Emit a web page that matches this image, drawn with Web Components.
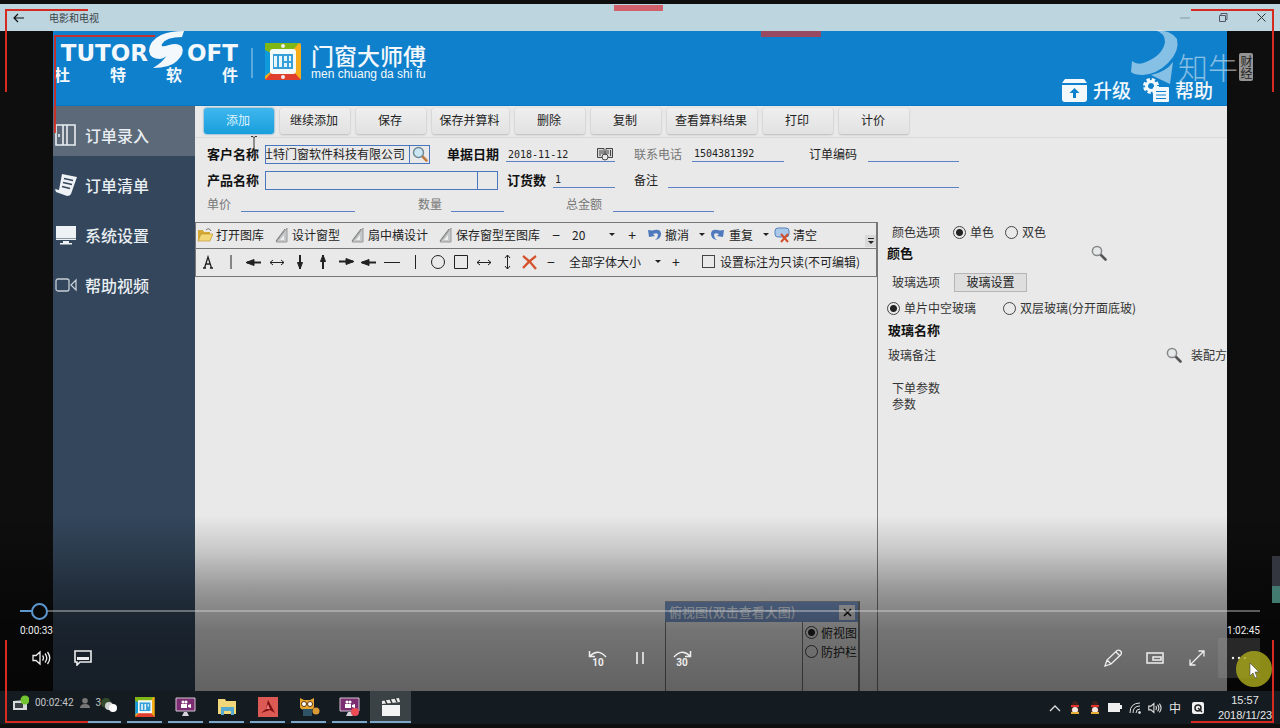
<!DOCTYPE html>
<html lang="zh-CN">
<head>
<meta charset="utf-8">
<title>电影和电视</title>
<style>
body{margin:0;background:#101010;color:#222;font:12px/16px "Noto Sans CJK SC","Noto Sans",sans-serif}
</style>
</head>
<body>
<desktop-screen></desktop-screen>
<script>
const RESET = '*,:host{box-sizing:border-box}*{margin:0}button,input,select{font:inherit;color:inherit;border:0;background:none;padding:0;border-radius:0;outline:0}svg{display:block;flex:none}';
function define(name, css, html) {
  const t = document.createElement('template');
  t.innerHTML = `<style>${RESET}${css}</style>${html}`;
  customElements.define(name, class extends HTMLElement {
    constructor() {
      super();
      this.attachShadow({ mode: 'open' }).append(t.content.cloneNode(true));
    }
  });
}
const RADIO = 'input[type=radio]{appearance:none;width:13px;height:13px;flex:none;border:1px solid #444;border-radius:50%}input[type=radio]:checked{background:radial-gradient(circle,#222 0 3px,transparent 4px)}label{display:flex;align-items:center;white-space:nowrap}';
const LENS = '<svg width="16" height="16" viewBox="0 0 16 16"><path d="M9.5 9.5l5 5" stroke="#555" stroke-width="2.6" stroke-linecap="round"/><circle cx="6" cy="6" r="4.6" fill="#e6e9ea" stroke="#888" stroke-width="1.5"/></svg>';

/* ---- window title bar ---- */
define('title-bar',
`:host{display:flex;align-items:center;height:27px;background:#bcd5df;color:#3c4448;font-size:10px}
button{display:grid;place-items:center;width:38px;height:27px}
.back{margin-right:11px}
h1{font-size:10px;font-weight:400;flex:1;color:#3c4448}`,
`<button class="back" aria-label="返回"><svg width="12" height="10" viewBox="0 0 12 10" fill="none" stroke="#111" stroke-width="1.2"><path d="M11 5H1M5 1L1 5l4 4"/></svg></button>
<h1>电影和电视</h1>
<button aria-label="最小化"><svg width="10" height="10" viewBox="0 0 10 10"><path d="M0 5h10" stroke="#8a999f"/></svg></button>
<button aria-label="还原"><svg width="10" height="10" viewBox="0 0 10 10" fill="none" stroke="#556"><path d="M1.5 2.5h6v6h-6zM3 2.500V.5h6v6H7.500"/></svg></button>
<button aria-label="关闭"><svg width="9" height="9" viewBox="0 0 9 9"><path d="M.5.5l8 8M8.500.5l-8 8" stroke="#333"/></svg></button>`);

/* ---- blue application header ---- */
define('app-header',
`:host{display:flex;height:75px;background:#0f80cb;color:#f2f8fc;align-items:flex-start;overflow:hidden;border-bottom:1px solid #0a76bf}
.brand{width:184px;display:flex;flex-direction:column;margin-left:1px}
.word{display:flex;align-items:center;height:35px;justify-content:flex-end;font:bold 23px/24px "DejaVu Sans",sans-serif;padding-top:8px}
.word svg{margin:-6px -1px 0 -2px}
.cn{display:flex;justify-content:space-between;font-weight:700;font-size:16px;line-height:16px}
.rule{width:2px;height:30px;background:#5aaade;margin:17px 12px 0 13px}
.app{display:flex;gap:10px;padding-top:12px;align-items:flex-start}
.name{font-size:23px;line-height:24px;font-weight:500}
.py{font:12px/14px "Liberation Sans",sans-serif;white-space:nowrap}
nav{margin-left:auto;display:flex;padding:46px 14px 0 0;gap:12px}
a{color:inherit;text-decoration:none;display:flex;align-items:center;gap:6px;font-size:19px;line-height:26px;font-weight:500}`,
`<div class="brand"><div class="word"><span>TUTOR</span><svg width="42" height="38" viewBox="0 0 38 38"><path d="M36 0Q22 0 13 4Q1 10 1 20Q2 28 12 28Q17 27 19 24Q15 31 5 37Q22 37 29 30Q37 22 34 16Q30 11 21 14Q12 17 14 13Q18 6 34 6Z" fill="#f2f8fc"/></svg><span>OFT</span></div>
<div class="cn"><span>杜</span><span>特</span><span>软</span><span>件</span></div></div>
<div class="rule"></div>
<div class="app"><svg width="36" height="37" viewBox="0 0 36 37"><rect width="36" height="37" rx="2" fill="#f5ae18"/><path d="M0 0h34l-6 7H6L0 13Z" fill="#7fb717"/><path d="M0 7l8 4v16l-8 6Z" fill="#0f9adb"/><path d="M0 37l7-8h22l7 8Z" fill="#df3f2c"/><rect x="5" y="6" width="26" height="25" rx="3" fill="#f4faf8"/><path d="M8 11h20v15H8z" fill="#38a0d8"/><path d="M9 13h3v11H9zM14 13h3v11h-3zM19 13h3v5h-3zM24 13h2v5h-2zM19 20h3v4h-3zM24 20h2v4h-2z" fill="#e7f6fb"/><circle cx="18" cy="3" r="2" fill="#eee"/><circle cx="18" cy="34" r="2" fill="#eee"/></svg>
<div><div class="name">门窗大师傅</div><div class="py">men chuang da shi fu</div></div></div>
<nav><a href="#upgrade"><svg width="25" height="23" viewBox="0 0 25 23"><path d="M3 0h19l3 4H0zM0 6h25v14q0 3-3 3H3q-3 0-3-3z" fill="#f2f8fc"/><path d="M12.500 9l5 5h-3.500v5h-3v-5H7.500z" fill="#0f80cb"/></svg>升级</a>
<a href="#help"><svg width="26" height="24" viewBox="0 0 26 24"><circle cx="8" cy="8" r="6" fill="none" stroke="#f2f8fc" stroke-width="4" stroke-dasharray="3 1.7"/><circle cx="8" cy="8" r="4.500" fill="none" stroke="#f2f8fc" stroke-width="3"/><rect x="10" y="9" width="16" height="15" rx="1" fill="#f2f8fc"/><path d="M13 13.500h10M13 17h10M13 20.500h10" stroke="#0f80cb"/></svg>帮助</a></nav>`);

/* ---- left navigation ---- */
define('side-nav', ':host{display:block;width:142px;background:#33465b}nav{display:flex;flex-direction:column}', '<nav><slot></slot></nav>');
define('nav-item',
`:host{display:block;color:#e9eef2}
:host([active]){background:#5b6978}
a{display:flex;align-items:center;gap:8px;height:50px;padding:8px 0 0 2px;color:inherit;text-decoration:none;font-size:16px;font-weight:500}
::slotted(svg){display:block;flex:none}`,
`<a href="#section"><slot name="icon"></slot><slot></slot></a>`);

/* ---- command buttons ---- */
define('action-bar', ':host{display:flex;gap:6px;padding:2px 9px 3px;height:32px;border-bottom:1px solid #d9dadb}', '<slot></slot>');
define('action-button',
`:host{display:block;width:70px}
:host([size=m]){width:77px}:host([size=l]){width:90px}
button{width:100%;height:26px;border-radius:3px;background:linear-gradient(#efefef,#e2e2e2);box-shadow:0 1px 2px #bbb,0 0 1px #aaa;padding:0 2px 2px 0;white-space:nowrap}
:host([primary]) button{background:linear-gradient(#3fb6ee,#189fdc);box-shadow:0 0 2px #0b72a8;color:#dff3fc}`,
'<button><slot></slot></button>');

/* ---- order form ---- */
define('order-form',
`:host{display:block;padding:3px 12px 7px}
.row{display:grid;height:26px;align-items:center;white-space:nowrap}
.r1{grid-template-columns:58px 182px 59px 128px 58px 117px 59px 91px}
.r2{grid-template-columns:58px 242px 46px 81px 34px 291px}
.r3{grid-template-columns:34px 177px 33px 115px 47px 101px;height:22px;color:#777}
.row>label{padding-bottom:1px}
.b{font-weight:700;font-size:13px;color:#111}
.soft{color:#777}
input{height:16px;width:100%;border-bottom:1px solid #5c82c4;font:10px/14px "DejaVu Sans Mono",monospace;padding:0 2px;display:block}
.combo{display:flex;height:19px;border:1px solid #4a76bd}
.combo input{border:0;flex:1;width:0;font:12px/16px "Noto Sans CJK SC",sans-serif;padding:0 4px 2px 0;height:17px}
.combo button{width:20px;border-left:1px solid #4a76bd;display:grid;place-items:center}
.date{display:flex;width:109px;height:16px;border-bottom:1px solid #5c82c4}
.date input{border:0;flex:1;width:0}.date button{width:20px;display:grid;place-items:center}`,
`<div class="row r1"><label class="b" for="cust">客户名称</label><div class="combo" style="width:165px"><input id="cust" dir="rtl" value="杜特门窗软件科技有限公司"><button aria-label="查找客户"><svg width="16" height="16" viewBox="0 0 16 16"><path d="M10 10l4.500 4.500" stroke="#c07a3e" stroke-width="2.500" stroke-linecap="round"/><circle cx="6.500" cy="6.500" r="5" fill="#cbe6f1" stroke="#6c8797" stroke-width="1.400"/></svg></button></div>
<label class="b" for="date">单据日期</label><div class="date"><input id="date" value="2018-11-12"><button aria-label="选择日期"><svg width="16" height="14" viewBox="0 0 16 14" fill="none" stroke="#444"><path d="M.5 1.500h6.500v9H.5zM9 1.500h6.500v9H9z" fill="#d8d8d8"/><path d="M3 3v6M5 3v4M11 3v4M13.500 3v6"/><circle cx="8" cy="10" r="3" fill="#e9e9e9"/><path d="M8 4v4"/></svg></button></div>
<label class="soft" for="tel">联系电话</label><input id="tel" value="1504381392" style="width:92px">
<label for="code">订单编码</label><input id="code"></div>
<div class="row r2"><label class="b" for="prod">产品名称</label><div class="combo" style="width:233px"><input id="prod"><button aria-label="选择产品"></button></div>
<label class="b" for="qty">订货数</label><input id="qty" value="1" style="width:62px"><label for="note">备注</label><input id="note"></div>
<div class="row r3"><label for="price">单价</label><input id="price" style="width:114px"><label for="num">数量</label><input id="num" style="width:53px"><label for="total">总金额</label><input id="total"></div>`);

/* ---- drawing toolbars ---- */
const RULER = '<svg width="16" height="16" viewBox="0 0 16 16"><path d="M14 1v14H3z" fill="#c5c8ca" stroke="#999"/><path d="M11 8v5H7z" fill="#eee"/><path d="M3 14L12 2" stroke="#777"/></svg>';
const sv = (d) => `<button aria-label="绘图工具"><svg width="18" height="18" viewBox="0 0 18 18" fill="none" stroke="#222">${d}</svg></button>`;
define('draw-toolbar',
`:host{display:block;border:1px solid #777;margin-left:1px;position:relative;color:#222}
.bar{display:flex;align-items:center;height:25px;padding:0 0 2px 1px;gap:9px;white-space:nowrap}
.bar+.bar{border-top:1px solid #777;height:28px;gap:0;padding-left:0}
button{display:flex;align-items:center;gap:3px;flex:none}
.sign{width:14px;justify-content:center;font-size:14px}
.tools{display:grid;grid-template-columns:repeat(15,23px);margin-right:3px}
.tools button{justify-content:center;height:25px}
.group{display:flex;align-items:center;gap:4px;margin-left:-2px}
.split{display:flex;gap:9px;align-items:center}
.caret{width:8px;height:16px;justify-content:center}
.caret:before,.pick:after{content:"";border:3px solid transparent;border-top-color:#222;border-bottom:0}
.pick{position:relative;display:flex;align-items:center}
.pick:after{position:absolute;right:1px;pointer-events:none}
select{appearance:none;width:44px}
.wide select{width:93px}
.wide{margin:0 7px 0 11px}
.check{display:flex;align-items:center;gap:5px;margin-left:19px}
.check input{appearance:none;width:13px;height:13px;border:1px solid #444}
.more{position:absolute;right:0;top:12px;width:11px;height:12px;background:#d8d8d8;display:grid;place-items:center}`,
`<div class="bar"><button><svg width="16" height="16" viewBox="0 0 16 16"><path d="M1 14V3h5l1 2h6v9z" fill="#d6a936"/><path d="M1 14l3-7h12l-3 7z" fill="#f3d777" stroke="#b98b22" stroke-width=".6"/><path d="M9 3q3-3 5 1" fill="none" stroke="#777"/></svg>打开图库</button>
<button>${RULER}设计窗型</button><button>${RULER}扇中横设计</button><button>${RULER}保存窗型至图库</button>
<button class="sign" aria-label="缩小">−</button><span class="pick"><select aria-label="缩放"><option>20</option></select></span><button class="sign" aria-label="放大">+</button>
<div class="group"><div class="split"><button><svg width="16" height="16" viewBox="0 0 16 16"><path d="M2 3l1 7 6-1-2-2q5-2 5 1 0 3-3 5 6-1 6-6 0-6-9-3.500z" fill="#4e79bd"/></svg>撤消</button><button class="caret" aria-label="撤消列表"></button></div>
<div class="split"><button><svg width="16" height="16" viewBox="0 0 16 16"><path d="M14 3l-1 7-6-1 2-2q-5-2-5 1 0 3 3 5-6-1-6-6 0-6 9-3.500z" fill="#4e79bd"/></svg>重复</button><button class="caret" aria-label="重复列表"></button></div>
<button><svg width="16" height="16" viewBox="0 0 16 16"><rect x="1" y="1" width="14" height="9" rx="3" fill="#a9c8ea" stroke="#5682b8"/><path d="M7 7l7 8M14 7l-7 8" stroke="#d4502c" stroke-width="2"/></svg>清空</button></div></div>
<div class="bar"><div class="tools"><button aria-label="文字"><svg width="18" height="18" viewBox="0 0 18 18" fill="none" stroke="#222" stroke-width="1.300"><path d="M5.500 15L9 4l3.500 11M6.500 11h5M4 15h3M11 15h3"/></svg></button>
${sv('<path d="M9 2v14"/>')}${sv('<path d="M2 9.500h14" stroke-width="2"/><path d="M1 9.500l8-3v6z" fill="#222"/>')}${sv('<path d="M2 9.500h14M5 7L2 9.500l3 2.500M13 7l3 2.500-3 2.500"/>')}
${sv('<path d="M9 2v14" stroke-width="2"/><path d="M6.500 9.500L9 16l2.500-6.500z" fill="#222"/>')}${sv('<path d="M9 2v14" stroke-width="2"/><path d="M6.500 8.500L9 2l2.500 6.500z" fill="#222"/>')}
${sv('<path d="M2 8.500h14" stroke-width="2"/><path d="M17 8.500l-8-3v6z" fill="#222"/>')}${sv('<path d="M2 9.500h14" stroke-width="2"/><path d="M1 9.500l8-3v6z" fill="#222"/>')}${sv('<path d="M1 9.500h16"/>')}
${sv('<path d="M9.500 2v14"/>')}${sv('<circle cx="9" cy="9" r="6.500"/>')}${sv('<path d="M2.500 2.500h13v13h-13z"/>')}${sv('<path d="M2 9.500h14M5 7L2 9.500l3 2.500M13 7l3 2.500-3 2.500"/>')}
${sv('<path d="M9.500 2v14M7 5l2.500-3L12 5M7 13l2.500 3 2.500-3"/>')}${sv('<path d="M2 3q7 5 13 13M15 3Q8 8 2 15" stroke="#d5532c" stroke-width="2.200"/>')}</div>
<button class="sign" aria-label="减小字体">−</button><span class="pick wide"><select aria-label="字体大小"><option>全部字体大小</option></select></span><button class="sign" aria-label="增大字体">+</button>
<label class="check"><input type="checkbox">设置标注为只读(不可编辑)</label></div>
<button class="more" aria-label="更多"><svg width="8" height="9" viewBox="0 0 8 9"><path d="M1 1.500h6" stroke="#222"/><path d="M1 4h6L4 7z" fill="#222"/></svg></button>`);

/* ---- floating top view window ---- */
define('top-view',
`:host{display:flex;flex-direction:column;width:195px;height:90px;border-right:2px solid #777;border-top:1px solid #999}
header{display:flex;height:20px;align-items:center;justify-content:space-between;background:#7795c6;color:#dfe7f2;padding:0 3px 0 4px;font-size:13px;font-weight:500}
header button{width:16px;height:15px;background:#ddd;display:grid;place-items:center}
.body{flex:1;display:grid;grid-template-columns:1fr 56px;border-left:1px solid #777}
.opts{border-left:1px solid #777;padding:1px 0 0 2px}
.opts label{height:19px;gap:3px;color:#222}${RADIO}`,
`<header><span>俯视图(双击查看大图)</span><button aria-label="关闭"><svg width="9" height="9" viewBox="0 0 9 9"><path d="M1 1l7 7M8 1L1 8" stroke="#111" stroke-width="1.600"/></svg></button></header>
<div class="body"><div></div><div class="opts"><label><input type="radio" name="v" checked>俯视图</label><label><input type="radio" name="v">防护栏</label></div></div>`);

/* ---- colour and glass options ---- */
define('glass-panel',
`:host{display:flex;flex-direction:column;border-left:1px solid #777;padding:0 0 0 9px;overflow:hidden;color:#333}
.row{display:flex;align-items:center;height:24px;white-space:nowrap}
${RADIO}label{gap:4px}
.in{padding-left:5px}
b{font-size:13px;color:#111}
.set{margin-left:14px;width:73px;height:19px;background:#dedede;border:1px solid #b5b5b5;line-height:16px;color:#222}
.lens{display:block}`,
`<div class="row in" style="height:20px"><span>颜色选项</span><label style="margin-left:13px"><input type="radio" name="c" checked>单色</label><label style="margin-left:11px"><input type="radio" name="c">双色</label></div>
<div class="row" style="height:22px"><b>颜色</b><button class="lens" aria-label="选择颜色" style="margin-left:178px">${LENS}</button></div>
<div class="row in" style="height:36px"><span>玻璃选项</span><button class="set">玻璃设置</button></div>
<div class="row" style="height:16px"><label><input type="radio" name="g" checked>单片中空玻璃</label><label style="margin-left:27px"><input type="radio" name="g">双层玻璃(分开面底玻)</label></div>
<div class="row" style="height:28px;padding-left:1px"><b>玻璃名称</b></div>
<div class="row" style="height:22px;padding-left:1px"><span>玻璃备注</span><button class="lens" aria-label="选择备注" style="margin-left:230px">${LENS}</button><span style="margin-left:9px">装配方</span></div>
<div class="row in" style="height:30px;align-items:flex-end"><span>下单参数</span></div>
<div class="row in" style="height:16px"><span>参数</span></div>`);

/* ---- the recorded application ---- */
define('door-app',
`:host{display:flex;flex-direction:column;background:#e9e9e9;overflow:hidden}
.body{flex:1;display:flex;min-height:0}
main{flex:1;display:flex;flex-direction:column;min-width:0}
.work{flex:1;display:grid;grid-template-columns:1fr 350px;min-height:0}
.canvas{position:relative;min-width:0}
.canvas top-view{position:absolute;right:17px;bottom:0}`,
`<app-header></app-header><div class="body"><side-nav>
<nav-item active><svg slot="icon" width="22" height="22" viewBox="0 0 22 22" fill="none" stroke="#e9eef2" stroke-width="1.600"><path d="M1 1h19v20H1zM8 1v20M12 1v20M4 10v3"/></svg>订单录入</nav-item>
<nav-item><svg slot="icon" width="22" height="22" viewBox="0 0 22 22"><path d="M7 0l15 3-6 17q-1 2-4 2L1 18l-1-3 4 1z" fill="#eef2f5"/><path d="M9 4.500l9 2M8 8.500l9 2M7 12.500l8 2" stroke="#33465b" stroke-width="1.600" fill="none"/></svg>订单清单</nav-item>
<nav-item><svg slot="icon" width="22" height="20" viewBox="0 0 22 20"><path d="M1 1h20v14H1zM8 16h6v2h3v1.500H5V18h3z" fill="#eef2f5"/><path d="M1 13.500h20" stroke="#8a98a5"/></svg>系统设置</nav-item>
<nav-item><svg slot="icon" width="22" height="16" viewBox="0 0 22 16" fill="none" stroke="#c7d0d8" stroke-width="1.300"><rect x="1" y="2" width="13" height="12" rx="2"/><path d="M21 3v10l-5-5z"/></svg>帮助视频</nav-item>
</side-nav><main>
<action-bar><action-button primary>添加</action-button><action-button>继续添加</action-button><action-button>保存</action-button><action-button size="m">保存并算料</action-button><action-button>删除</action-button><action-button>复制</action-button><action-button size="l">查看算料结果</action-button><action-button>打印</action-button><action-button>计价</action-button></action-bar>
<order-form></order-form>
<div class="work"><div class="canvas"><draw-toolbar></draw-toolbar><top-view></top-view></div><glass-panel></glass-panel></div>
</main></div>`);

/* ---- player transport controls ---- */
define('player-controls',
`:host{display:flex;flex-direction:column;justify-content:flex-end;height:176px;color:#eee;font:10px/14px Roboto,sans-serif;padding:0 20px 13px;background:linear-gradient(rgba(0,0,0,0),rgba(0,0,0,.14) 20%,rgba(0,0,0,.35) 42%,rgba(0,0,0,.5) 65%,rgba(0,0,0,.58))}
input{appearance:none;display:block;width:100%;height:17px}
input::-webkit-slider-runnable-track{height:17px;background:linear-gradient(90deg,#5c97cf 12px,transparent 12px 26px,rgba(220,220,220,.4) 26px) 0 7px/100% 2px no-repeat}
input::-webkit-slider-thumb{appearance:none;width:17px;height:17px;border:2px solid #5c97cf;border-radius:50%}
.times{display:flex;justify-content:space-between;padding-top:4px;height:18px}
.row{display:grid;grid-template-columns:1fr auto 1fr;height:40px}
.row div{display:flex}.row div:last-child{justify-content:flex-end}
button{width:42px;height:40px;display:grid;place-items:center}
.hot{background:rgba(160,160,160,.22)}`,
`<input type="range" aria-label="播放进度" min="0" max="3765" value="33"><div class="times"><span>0:00:33</span><span>1:02:45</span></div>
<div class="row"><div>
<button aria-label="音量"><svg width="19" height="16" viewBox="0 0 19 16" fill="none" stroke="#eee" stroke-width="1.300"><path d="M1 5.500h3L8 2v12l-4-3.500H1zM10.500 5.500q2 2.500 0 5M13 3.500q3.500 4.500 0 9M15.500 2q4.500 6 0 12"/></svg></button>
<button aria-label="字幕"><svg width="18" height="16" viewBox="0 0 18 16" fill="none" stroke="#eee" stroke-width="1.600"><path d="M1 1h16v11H6l-3 3v-3H1z"/><path d="M3 8.500h12" stroke-width="3"/></svg></button></div><div>
<button aria-label="后退10秒"><svg width="20" height="18" viewBox="0 0 20 18"><path d="M2 7q8-8 16 1M1.500 2v5.500H7" fill="none" stroke="#eee" stroke-width="1.500"/><text x="10" y="17" text-anchor="middle" font-family="Roboto" font-size="10" font-weight="700" fill="#eee">10</text></svg></button>
<button aria-label="暂停"><svg width="10" height="14" viewBox="0 0 10 14"><path d="M2 1v12M8 1v12" stroke="#eee" stroke-width="1.600"/></svg></button>
<button aria-label="前进30秒"><svg width="20" height="18" viewBox="0 0 20 18"><path d="M2 8q8-9 16-1M18.500 2v5.500H13" fill="none" stroke="#eee" stroke-width="1.500"/><text x="10" y="17" text-anchor="middle" font-family="Roboto" font-size="10" font-weight="700" fill="#eee">30</text></svg></button></div><div>
<button aria-label="编辑"><svg width="18" height="18" viewBox="0 0 18 18" fill="none" stroke="#eee" stroke-width="1.300"><path d="M1 17l2-6L13 1.500q2-1 3.500.5t.5 3.500L7 15zM12 3l3.500 3.500M3 11l4 4"/></svg></button>
<button aria-label="画中画"><svg width="18" height="12" viewBox="0 0 18 12" fill="none" stroke="#eee" stroke-width="1.500"><path d="M1 1h16v10H1z"/><path d="M7 5h8v3H7z"/></svg></button>
<button aria-label="全屏"><svg width="16" height="16" viewBox="0 0 16 16" fill="none" stroke="#eee" stroke-width="1.300"><path d="M1 15L15 1M9.500 1H15v5.500M1 9.500V15h5.500"/></svg></button>
<button class="hot" aria-label="更多"><svg width="16" height="4" viewBox="0 0 16 4" fill="#eee"><circle cx="2" cy="2" r="1.200"/><circle cx="8" cy="2" r="1.200"/><circle cx="14" cy="2" r="1.200"/></svg></button></div></div>`);

/* ---- recording status and taskbar ---- */
define('rec-status',
`:host{display:flex;align-items:center;width:124px;height:32px;padding:0 0 6px 13px;color:#c4c6c6;font:10px/14px Roboto,sans-serif;gap:6px}
.n{display:flex;align-items:center}`,
`<svg width="16" height="16" viewBox="0 0 16 16"><path d="M0 6l14-1v10H0z" fill="#d6dada"/><path d="M2 8h8v5H2z" fill="#3a4243"/><circle cx="12" cy="5" r="4.500" fill="#72c530"/></svg>
<span>00:02:42</span>
<svg width="10" height="10" viewBox="0 0 10 10" fill="#777"><circle cx="5" cy="2.800" r="2.800"/><path d="M0 10q0-4 5-4t5 4z"/></svg>
<span class="n">3<svg width="16" height="18" viewBox="0 0 16 18"><circle cx="5" cy="9" r="5" fill="#486b36" opacity=".6"/><circle cx="8" cy="12" r="4" fill="#cfd3d3"/><circle cx="12" cy="14" r="4" fill="#fff"/></svg></span>`);
define('task-icon',
`:host{display:block;width:41px;height:32px}
button{width:100%;height:32px;display:grid;place-items:center;position:relative}
:host([active]) button{background:#3b4245}
button:after{content:"";position:absolute;inset:auto 3px 0;height:2px;background:#7ba6c8}
:host([active]) button:after{inset:auto 0 0}
::slotted(svg){display:block}`, '<button aria-label="任务"><slot></slot></button>');
define('task-bar',
`:host{display:flex;height:33px;background:#141c22;color:#e6e6e6;align-items:flex-start}
.apps{display:flex}
rec-status{border-bottom:2px solid;border-image:linear-gradient(90deg,transparent 88px,#7ba6c8 88px 120px,transparent 120px) 1}
.tray{margin-left:auto;display:flex;align-items:center;height:33px}
.tray button{width:20px;height:32px;display:grid;place-items:center}
.tray .q{width:26px}
.clock{font:11px/15px "Liberation Sans",sans-serif;text-align:center;width:56px;margin:0 7px 0 6px}`,
`<rec-status></rec-status><div class="apps">
<task-icon><svg width="20" height="20" viewBox="0 0 36 37"><path d="M0 0h36v37H0z" fill="#f5ae18"/><path d="M0 0h34l-6 7H6L0 13Z" fill="#7fb717"/><path d="M0 7l8 4v16l-8 6Z" fill="#0f9adb"/><path d="M0 37l7-8h22l7 8Z" fill="#df3f2c"/><path d="M5 6h26v24H5z" fill="#f4faf8"/><path d="M8 10h20v16H8z" fill="#38a0d8"/><path d="M11 13h3v11h-3zM17 13h3v11h-3zM23 13h2v5h-2z" fill="#e7f6fb"/></svg></task-icon>
<task-icon><svg width="21" height="20" viewBox="0 0 21 20"><path d="M1 1h19v13H1z" fill="#7b2d72" stroke="#d5c4d3"/><path d="M7 19h7l-2-4H9z" fill="#d7d2d9"/><path d="M6 7h6v4H6zM13 8l3-1v4l-3-1z" fill="#fff"/><circle cx="8" cy="5" r="1.500" fill="#fff"/><circle cx="11" cy="5" r="1.500" fill="#fff"/></svg></task-icon>
<task-icon><svg width="20" height="18" viewBox="0 0 20 18"><path d="M1 1h7l1 2h10v13H1z" fill="#f0d77a"/><path d="M4 17V9h13v8h-3v-4H7v4z" fill="#55a8ce"/></svg></task-icon>
<task-icon><svg width="20" height="20" viewBox="0 0 20 20"><path d="M0 0h20v20H0z" fill="#dd5a54"/><path d="M10 3l7 13-5-3-9 3 5-4z" fill="#7c0f12"/><path d="M10 7l2 5H8z" fill="#e77"/></svg></task-icon>
<task-icon><svg width="22" height="20" viewBox="0 0 22 20"><path d="M2 1l4 2h6l4-2v9q0 3-7 3t-7-3z" fill="#e8a52e"/><path d="M5 12h9v7H5z" fill="#2f5366"/><circle cx="6" cy="7" r="2.500" fill="#fff" stroke="#5b3412"/><circle cx="12" cy="7" r="2.500" fill="#fff" stroke="#5b3412"/><circle cx="18" cy="14" r="3.500" fill="#d99a35"/></svg></task-icon>
<task-icon><svg width="21" height="20" viewBox="0 0 21 20"><path d="M1 1h19v13H1z" fill="#7b2d72" stroke="#d5c4d3"/><path d="M7 19h7l-2-4H9z" fill="#d7d2d9"/><path d="M6 7h6v4H6zM13 8l3-1v4l-3-1z" fill="#fff"/><circle cx="8" cy="5" r="1.500" fill="#fff"/><circle cx="11" cy="5" r="1.500" fill="#fff"/><circle cx="16" cy="15" r="4" fill="#ed4c55"/></svg></task-icon>
<task-icon active><svg width="20" height="20" viewBox="0 0 20 20"><path d="M1 8h18v11H1z" fill="#f3f3f3"/><path d="M1 4l17-3 1 4L1 7z" fill="#eee"/><path d="M4 3l2 4M9 2l2 4M14 1l2 4" stroke="#333" stroke-width="1.500"/></svg></task-icon></div>
<div class="tray"><button aria-label="显示隐藏图标"><svg width="12" height="8" viewBox="0 0 12 8"><path d="M1 7l5-5 5 5" fill="none" stroke="#ddd" stroke-width="1.300"/></svg></button>
<button aria-label="QQ"><svg width="10" height="13" viewBox="0 0 10 13"><path d="M2 4q0-4 3-4t3 4l2 6-2 2H2l-2-2z" fill="#3d2320"/><path d="M1 4h8v2H1z" fill="#de3328"/><ellipse cx="5" cy="9" rx="3" ry="3" fill="#f5e6df"/><path d="M1 12h8" stroke="#e8ad33" stroke-width="2"/></svg></button>
<button aria-label="QQ"><svg width="10" height="13" viewBox="0 0 10 13"><path d="M2 4q0-4 3-4t3 4l2 6-2 2H2l-2-2z" fill="#3d2320"/><path d="M1 4h8v2H1z" fill="#de3328"/><ellipse cx="5" cy="9" rx="3" ry="3" fill="#f5e6df"/><path d="M1 12h8" stroke="#e8ad33" stroke-width="2"/></svg></button>
<button aria-label="电池"><svg width="14" height="9" viewBox="0 0 14 9"><path d="M0 0h12v2h2v4h-2v3H0z" fill="#eee"/></svg></button>
<button aria-label="网络"><svg width="12" height="12" viewBox="0 0 12 12" fill="none" stroke="#ddd"><path d="M1 11Q1 1 11 1M4 11q0-7 7-7M7 11q0-4 4-4"/><circle cx="10.500" cy="10.500" r="1" fill="#ddd"/></svg></button>
<button aria-label="音量"><svg width="14" height="12" viewBox="0 0 19 16" fill="none" stroke="#ddd" stroke-width="1.500"><path d="M1 5.500h3L8 2v12l-4-3.500H1zM10.500 5.500q2 2.500 0 5M13 3.500q3.500 4.500 0 9M15.500 2q4.500 6 0 12"/></svg></button>
<button aria-label="输入法">中</button>
<button class="q" aria-label="QQ输入法"><svg width="12" height="12" viewBox="0 0 12 12"><rect width="12" height="12" rx="2" fill="#f2f2f2"/><circle cx="6" cy="6" r="3" fill="none" stroke="#222" stroke-width="1.500"/><path d="M6 6l4 4" stroke="#222" stroke-width="1.500"/></svg></button>
<div class="clock"><div>15:57</div><div>2018/11/23</div></div></div>`);

/* ---- channel watermark ---- */
define('water-mark',
`:host{display:flex;align-items:center;color:rgba(255,255,255,.5)}
.t{font-size:30px;line-height:36px;font-weight:300;margin:18px 1px 0 -2px}
.box{writing-mode:vertical-rl;background:rgba(205,205,205,.7);color:#222;font-size:12px;line-height:14px;width:14px;height:28px;margin-top:19px;text-align:center;border-radius:2px}`,
`<svg width="49" height="54" viewBox="0 0 49 54"><path d="M24 0q16 0 22 9 3 12-9 24-11 11-25 12-9 0-12-3l1-11q6 5 14 1 17-7 19-20 0-9-10-12z" fill="currentColor"/><path d="M42 32l-3 22-19-9q15-3 22-13z" fill="currentColor"/></svg><span class="t">知牛</span><span class="box">财经</span>`);

/* ---- red capture frame ---- */
define('capture-frame',
`:host{position:absolute;pointer-events:none;--c:#d52b20;inset:9px 6px 5px 5px}
i{position:absolute;width:83px;height:83px;border:0 solid var(--c)}
.a{left:0;top:0;border-width:2px 0 0 2px}.b{right:0;top:0;border-width:2px 2px 0 0}
.c{left:0;bottom:0;border-width:0 0 2px 2px}.d{right:0;bottom:0;border-width:0 2px 2px 0}
:host([inner]){inset:35px auto auto 54px;opacity:.9}
:host([inner]) .a{width:101px;height:98px}
:host([inner]) i:not(.a){display:none}`,
'<i class="a"></i><i class="b"></i><i class="c"></i><i class="d"></i>');

define('desktop-screen',
`:host{display:flex;flex-direction:column;height:100vh;min-height:600px;padding:4px 0;background:#0e0e0e;position:relative;overflow:hidden}
.stage{flex:1;display:flex;position:relative;min-height:0;padding:0 53px}
door-app{flex:1;min-width:0}
player-controls{position:absolute;inset:auto 0 0}
water-mark{position:absolute;right:27px;top:30px}
.tag{position:absolute;background:#d0606b;left:calc(50% - 26px);top:5px;width:49px;height:6px}
.tag.two{background:#994a60;left:calc(50% + 121px);top:31px;width:60px;height:6px}
.edge{position:absolute;right:0;bottom:125px;width:8px;height:47px;background:linear-gradient(#33363f 30px,#437a70 30px)}
.pointer{position:absolute;right:8px;bottom:41px}
.beam{position:absolute;left:250px;top:136px}`,
`<title-bar></title-bar><div class="stage"><door-app></door-app><player-controls></player-controls></div><task-bar></task-bar>
<water-mark></water-mark><capture-frame></capture-frame><capture-frame inner></capture-frame>
<div class="tag"></div><div class="tag two"></div><div class="edge"></div>
<svg class="beam" width="8" height="20" viewBox="0 0 8 20" fill="none" stroke="#333"><path d="M1 .5h2l1 1 1-1h2M4 1v18"/></svg>
<svg class="pointer" width="36" height="36" viewBox="0 0 36 36"><circle cx="18" cy="18" r="18" fill="#a9a81c" opacity=".82"/><path d="M14 12v13l3-3 2 5 2-1-2-5h4z" fill="#fff" stroke="#444" stroke-width=".6"/></svg>`);
</script>
</body>
</html>
